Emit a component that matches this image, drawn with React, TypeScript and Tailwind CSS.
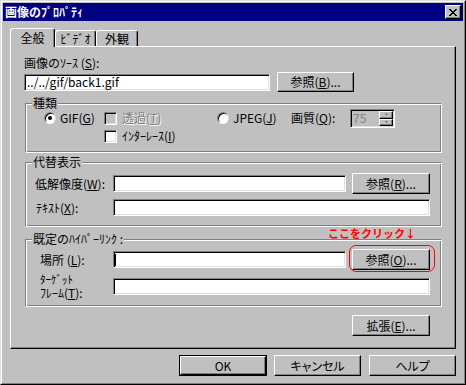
import React from "react";

const bevelOut =
  "border border-t-white border-l-white border-r-black border-b-black shadow-[inset_-1px_-1px_0_#808080]";
const sunken =
  "border border-t-[#808080] border-l-[#808080] border-r-white border-b-white shadow-[inset_1px_1px_0_#000,inset_-1px_-1px_0_#dfdfdf]";
const txt = "text-[12px] leading-[12px] whitespace-nowrap";
const dis = "text-[#808080] [text-shadow:1px_1px_0_#fff]";

function Btn({ className, children }: { className: string; children?: React.ReactNode }) {
  return (
    <div className={`${bevelOut} flex items-center justify-center bg-[#c0c0c0] text-black shrink-0 ${txt} ${className}`}>
      {children}
    </div>
  );
}

function U({ children }: { children: React.ReactNode }) {
  return <span className="underline underline-offset-[1px]">{children}</span>;
}

function Input({ className, children }: { className: string; children?: React.ReactNode }) {
  return (
    <div className={`${sunken} bg-white h-[17px] shrink-0 flex items-center ${className}`}>{children}</div>
  );
}

function Radio({ checked }: { checked?: boolean }) {
  return (
    <div className="w-[12px] h-[12px] shrink-0 rounded-full bg-white border border-t-[#808080] border-l-[#808080] border-r-[#dfdfdf] border-b-white shadow-[inset_1px_1px_0_#000] flex items-center justify-center">
      {checked && <div className="w-[4px] h-[4px] rounded-full bg-black" />}
    </div>
  );
}

function Check({ disabled }: { disabled?: boolean }) {
  return <div className={`${sunken} w-[13px] h-[13px] shrink-0 ${disabled ? "bg-[#c0c0c0]" : "bg-white"}`} />;
}

function Group({ label, className, children }: { label: string; className: string; children: React.ReactNode }) {
  return (
    <div
      className={`ml-[14px] w-[417px] border border-t-[#808080] border-l-[#808080] border-r-white border-b-white shadow-[inset_1px_1px_0_#fff,inset_-1px_-1px_0_#808080] flex flex-col ${className}`}
    >
      <div className={`-mt-[7px] ml-[6px] h-[12px] w-fit px-[1px] bg-[#c0c0c0] ${txt}`}>{label}</div>
      {children}
    </div>
  );
}

function CloseGlyph() {
  const rows = ["XX....XX", ".XX..XX.", "..XXXX..", "...XX...", "..XXXX..", ".XX..XX.", "XX....XX"];
  const rects: React.ReactNode[] = [];
  rows.forEach((r, y) =>
    r.split("").forEach((c, x) => {
      if (c === "X") rects.push(<rect key={`${x}-${y}`} x={x} y={y} width={1} height={1} fill="#000" />);
    })
  );
  return (
    <svg width="8" height="7" viewBox="0 0 8 7" shapeRendering="crispEdges">
      {rects}
    </svg>
  );
}

function SpinArrow({ up }: { up?: boolean }) {
  return (
    <svg width="5" height="3" viewBox="0 0 5 3" shapeRendering="crispEdges">
      {up ? (
        <>
          <rect x="2" y="0" width="1" height="1" fill="#808080" />
          <rect x="1" y="1" width="3" height="1" fill="#808080" />
        </>
      ) : (
        <>
          <rect x="1" y="0" width="3" height="1" fill="#808080" />
          <rect x="2" y="1" width="1" height="1" fill="#808080" />
        </>
      )}
    </svg>
  );
}

export default function App() {
  return (
    <div className="w-[466px] h-[385px] bg-[#c0c0c0] border border-t-[#dfdfdf] border-l-[#dfdfdf] border-r-black border-b-black font-['Noto_Sans_CJK_JP',sans-serif] text-black">
      <div className="h-full border border-t-white border-l-white border-r-[#808080] border-b-[#808080] p-[1px] flex flex-col">
        {/* Title bar */}
        <div className="h-[18px] bg-[#000080] flex items-center justify-between shrink-0">
          <span className="pl-[2px] text-white font-bold text-[12px] leading-[12px]">画像のﾌﾟﾛﾊﾟﾃｨ</span>
          <div className={`${bevelOut} mr-[2px] w-[16px] h-[14px] bg-[#c0c0c0] flex items-center justify-center`}>
            <CloseGlyph />
          </div>
        </div>

        {/* Tabs */}
        <div className="ml-[7px] mt-[7px] h-[18px] flex items-end shrink-0">
          <div className={`relative z-10 -mb-[1px] w-[45px] h-[19px] bg-[#c0c0c0] border-t border-l border-r border-t-white border-l-white border-r-black shadow-[inset_-1px_0_0_#808080] rounded-t-[3px] flex items-center justify-center ${txt}`}>
            全般
          </div>
          <div className={`w-[41px] h-[16px] border-t border-l border-r border-t-white border-l-white border-r-black shadow-[inset_-1px_0_0_#808080] rounded-t-[3px] flex items-center justify-center ${txt}`}>
            ﾋﾞﾃﾞｵ
          </div>
          <div className={`w-[42px] h-[16px] border-t border-l border-r border-t-white border-l-white border-r-black shadow-[inset_-1px_0_0_#808080] rounded-t-[3px] flex items-center justify-center ${txt}`}>
            外観
          </div>
        </div>

        {/* Tab panel */}
        <div className="ml-[7px] w-[446px] h-[303px] shrink-0 border border-t-white border-l-white border-r-black border-b-black shadow-[inset_-1px_-1px_0_#808080] flex flex-col">
          <div className={`mt-[10px] ml-[13px] h-[12px] ${txt}`}>
            画像のｿｰｽ (<U>S</U>):
          </div>
          <div className="mt-[3px] ml-[13px] h-[20px] flex items-center">
            <Input className="w-[246px]">
              <span className={`pl-[2px] ${txt}`}>../../gif/back1.gif</span>
            </Input>
            <Btn className="ml-[7px] w-[77px] h-[20px]">
              参照(<U>B</U>)...
            </Btn>
          </div>

          {/* 種類 */}
          <Group label="種類" className="mt-[11px] h-[50px]">
            <div className="mt-[1px] h-[16px] flex items-center">
              <div className="ml-[18px] w-[60px] flex items-center">
                <Radio checked />
                <span className={`ml-[4px] ${txt}`}>
                  GIF(<U>G</U>)
                </span>
              </div>
              <div className="w-[113px] flex items-center">
                <Check disabled />
                <span className={`ml-[5px] ${txt} ${dis}`}>
                  透過(<U>T</U>)
                </span>
              </div>
              <div className="w-[74px] flex items-center">
                <Radio />
                <span className={`ml-[4px] ${txt}`}>
                  JPEG(<U>J</U>)
                </span>
              </div>
              <div className={`w-[59px] ${txt}`}>
                画質(<U>Q</U>):
              </div>
              <div className={`${sunken} w-[45px] h-[19px] bg-[#c0c0c0] flex items-center shrink-0`}>
                <span className={`pl-[2px] flex-1 text-[#808080] ${txt}`}>75</span>
                <div className="mr-[1px] w-[14px] h-[15px] flex flex-col">
                  <div className={`${bevelOut} h-[8px] bg-[#c0c0c0] flex items-center justify-center`}>
                    <SpinArrow up />
                  </div>
                  <div className={`${bevelOut} h-[7px] bg-[#c0c0c0] flex items-center justify-center`}>
                    <SpinArrow />
                  </div>
                </div>
              </div>
            </div>
            <div className="mt-[2px] h-[16px] flex items-center">
              <div className="ml-[78px] flex items-center">
                <Check />
                <span className={`ml-[5px] ${txt}`}>
                  ｲﾝﾀｰﾚｰｽ(<U>I</U>)
                </span>
              </div>
            </div>
          </Group>

          {/* 代替表示 */}
          <Group label="代替表示" className="mt-[9px] h-[65px]">
            <div className="mt-[5px] h-[21px] flex items-center">
              <div className={`ml-[9px] w-[78px] ${txt}`}>
                低解像度(<U>W</U>):
              </div>
              <Input className="w-[233px]" />
              <Btn className="ml-[6px] w-[78px] h-[21px]">
                参照(<U>R</U>)...
              </Btn>
            </div>
            <div className="mt-[5px] h-[17px] flex items-center">
              <div className={`ml-[10px] w-[77px] ${txt}`}>
                ﾃｷｽﾄ(<U>X</U>):
              </div>
              <Input className="w-[317px]" />
            </div>
          </Group>

          <div className="h-[12px] ml-[317px] flex items-center">
            <span className="text-[11px] leading-[12px] font-bold text-[#ff0000] whitespace-nowrap">ここをクリック↓</span>
          </div>

          {/* 既定のハイパーリンク */}
          <Group label="既定のﾊｲﾊﾟｰﾘﾝｸ :" className="h-[68px]">
            <div className="mt-[4px] h-[21px] flex items-center">
              <div className={`ml-[14px] w-[73px] ${txt}`}>
                場所 (<U>L</U>):
              </div>
              <Input className="w-[233px]">
                <div className="ml-[1px] w-[1px] h-[12px] bg-black" />
              </Input>
              <div className="relative ml-[6px]">
                <div className="absolute -left-[3px] -top-[4px] w-[86px] h-[27px] border border-[#ff0000] rounded-[7px]" />
                <Btn className="w-[78px] h-[21px]">
                  参照(<U>O</U>)...
                </Btn>
              </div>
            </div>
            <div className="mt-[4px] h-[24px] flex items-center">
              <div className="ml-[14px] w-[73px] flex flex-col text-[12px] leading-[12px] whitespace-nowrap">
                <span className="h-[12px] text-[11px] leading-[11px]">ﾀｰｹﾞｯﾄ</span>
                <span className="h-[12px] mt-[1px] text-[12px] leading-[11px]">
                  ﾌﾚｰﾑ(<U>T</U>):
                </span>
              </div>
              <Input className="w-[317px]" />
            </div>
          </Group>

          <div className="mt-[8px] ml-[341px] flex">
            <Btn className="w-[78px] h-[21px]">
              拡張(<U>E</U>)...
            </Btn>
          </div>
        </div>

        {/* Bottom buttons */}
        <div className="mt-[6px] ml-[176px] flex shrink-0">
          <div className="border border-black w-[88px] h-[21px] flex">
            <Btn className="w-full h-full">OK</Btn>
          </div>
          <Btn className="ml-[7px] w-[87px] h-[21px] [font-feature-settings:'palt']">キャンセル</Btn>
          <Btn className="ml-[8px] w-[87px] h-[21px] [font-feature-settings:'palt']">ヘルプ</Btn>
        </div>
      </div>
    </div>
  );
}
